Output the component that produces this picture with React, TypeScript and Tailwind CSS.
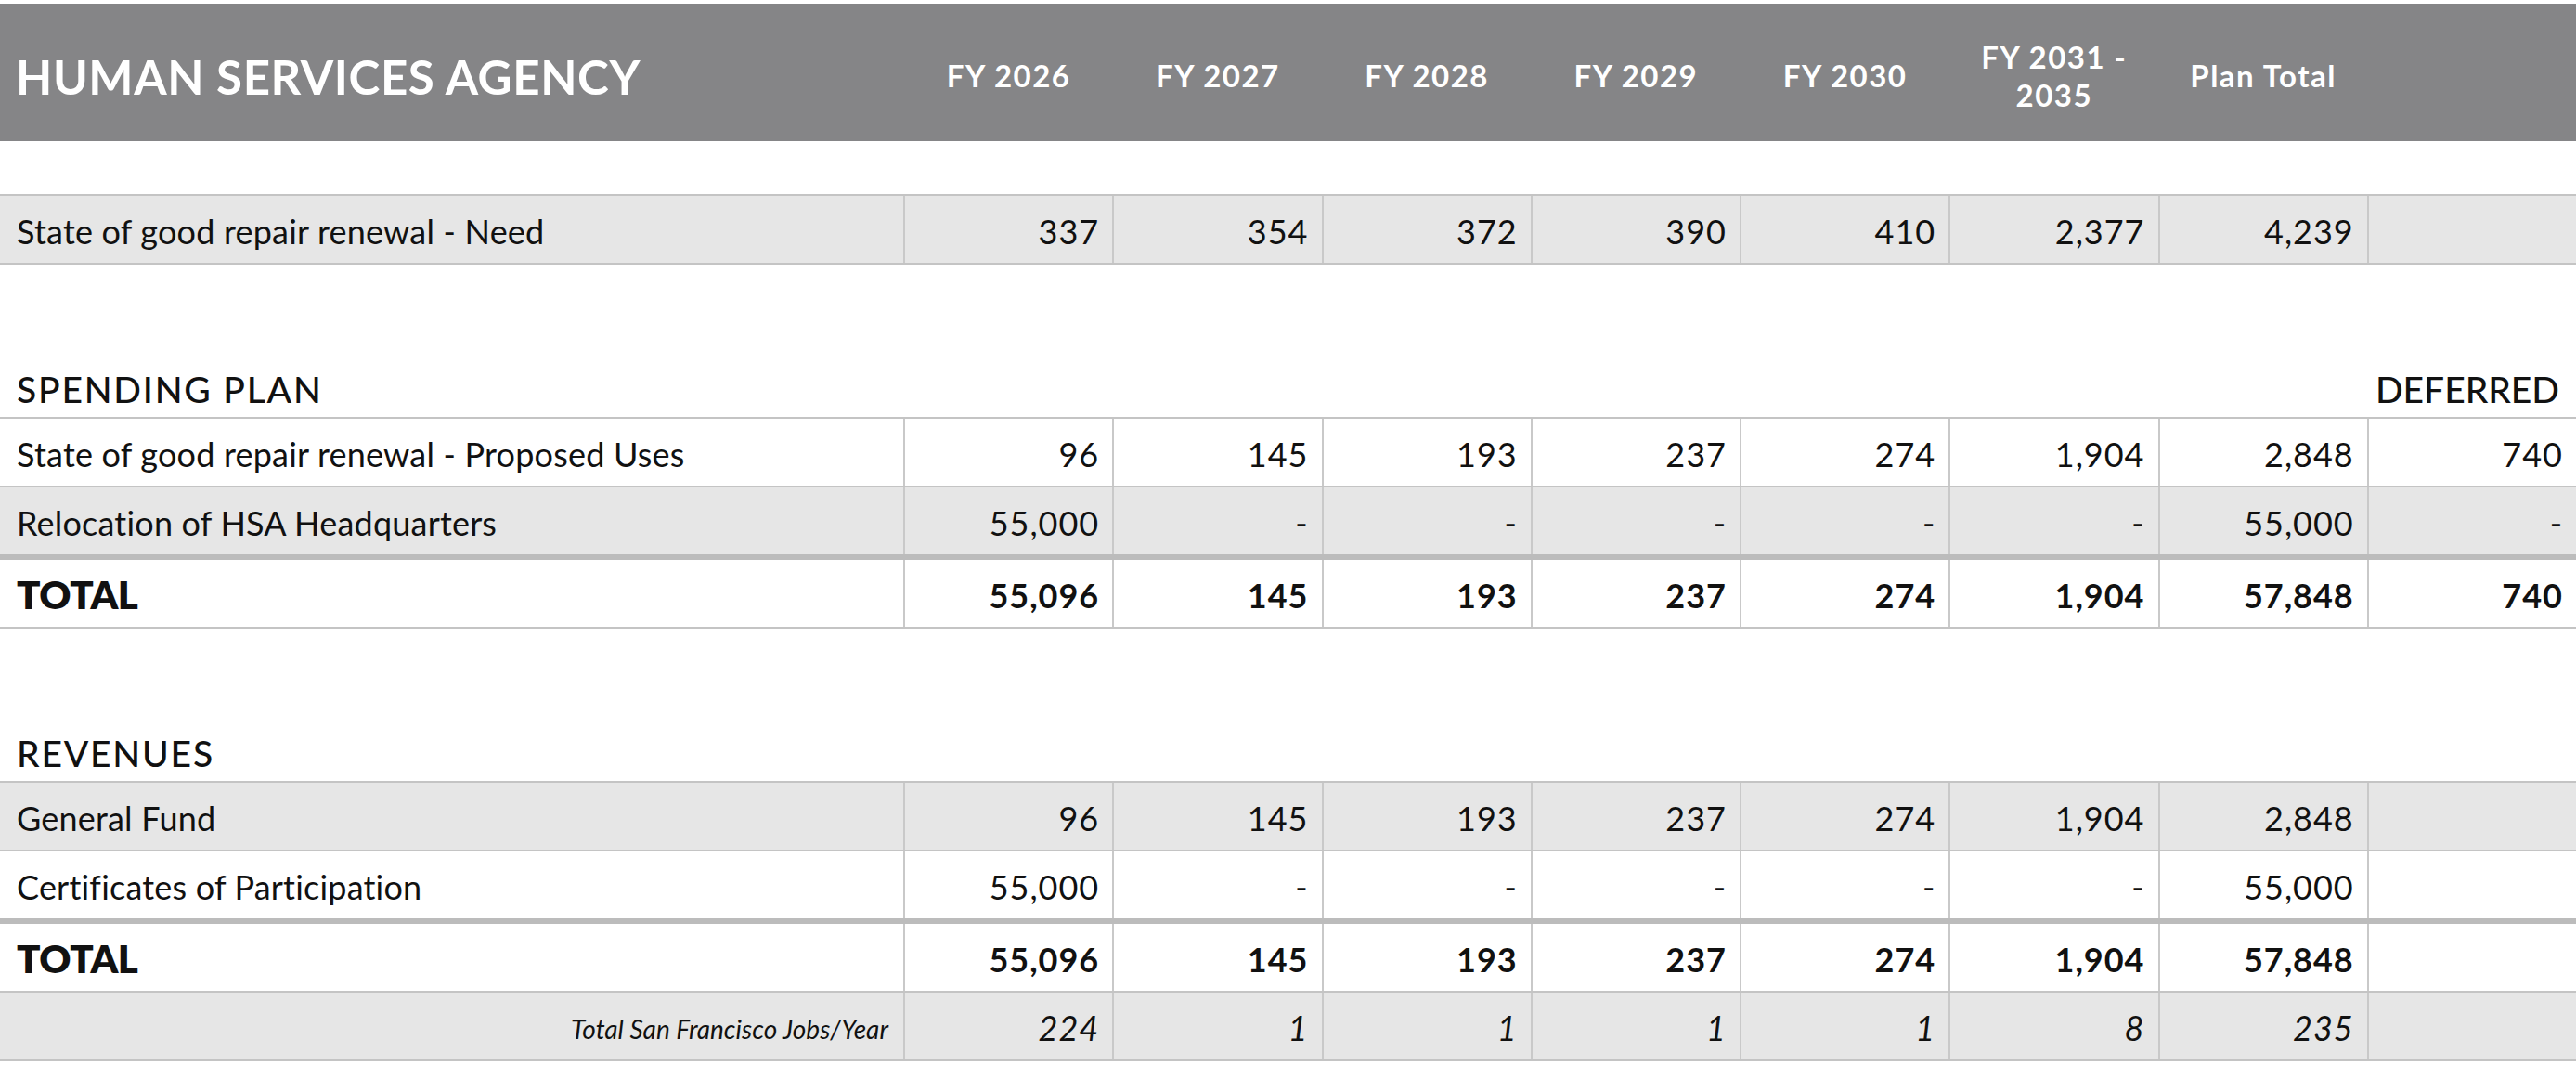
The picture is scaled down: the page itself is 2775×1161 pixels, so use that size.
const cols = ["FY 2026", "FY 2027", "FY 2028", "FY 2029", "FY 2030", "FY 2031 - 2035", "Plan Total", ""];

type Row = {
  label: string;
  values: string[];
  gray?: boolean;
  bold?: boolean;
  italic?: boolean;
};

const Cell = ({ value, bold, italic }: { value: string; bold?: boolean; italic?: boolean }) => (
  <div
    className={
      "flex-1 border-l-2 border-[#c9c9c9] flex items-center justify-end pr-[14px] pt-[3px] text-[36px] tracking-[1px] text-[#111] " +
      (bold ? "font-bold " : "") +
      (italic ? "italic" : "")
    }
  >
    {value}
  </div>
);

const DataRow = ({ row, thickTop }: { row: Row; thickTop?: boolean }) => (
  <div
    className={
      "flex " +
      (row.gray ? "bg-[#e6e6e6] " : "bg-white ") +
      (thickTop ? "h-[78px] border-t-[6px] border-[#bcbcbc]" : "h-[74px] border-t-2 border-[#c4c4c4]")
    }
  >
    {row.italic ? (
      <div className="w-[973px] shrink-0 flex items-center justify-end pr-[16px] pt-[6px] text-[28px] italic text-[#111]">
        {row.label}
      </div>
    ) : (
      <div
        className={
          "w-[973px] shrink-0 flex items-center pl-[18px] pt-[3px] text-[#111] " +
          (row.bold ? "text-[42px] font-extrabold tracking-[-0.5px]" : "text-[36px] tracking-[0.2px]")
        }
      >
        {row.label}
      </div>
    )}
    {row.values.map((v, i) => (
      <Cell key={i} value={v} bold={row.bold} italic={row.italic} />
    ))}
  </div>
);

const SectionLabel = ({ title, right }: { title: string; right?: string }) => (
  <div className="flex h-[164px] items-end pb-[1px] pl-[18px] pr-[18px] text-[39px] font-medium text-[#111]">
    <div className="flex-1 tracking-[1.8px]">{title}</div>
    {right && <div className="tracking-[0px]">{right}</div>}
  </div>
);

const spending: Row[] = [
  { label: "State of good repair renewal - Proposed Uses", values: ["96", "145", "193", "237", "274", "1,904", "2,848", "740"] },
  { label: "Relocation of HSA Headquarters", values: ["55,000", "-", "-", "-", "-", "-", "55,000", "-"], gray: true },
];

const revenues: Row[] = [
  { label: "General Fund", values: ["96", "145", "193", "237", "274", "1,904", "2,848", ""], gray: true },
  { label: "Certificates of Participation", values: ["55,000", "-", "-", "-", "-", "-", "55,000", ""] },
];

export default function App() {
  return (
    <div className="w-[2775px] h-[1161px] bg-white pt-[4px] font-['Lato','Liberation_Sans',sans-serif] overflow-hidden">
      {/* header */}
      <div className="flex h-[148px] bg-[#858587] text-white">
        <div className="w-[973px] shrink-0 flex items-center pl-[17px] pt-[10px] text-[51px] font-bold tracking-[0.6px]">
          HUMAN SERVICES AGENCY
        </div>
        {cols.map((c, i) => (
          <div
            key={i}
            className="flex-1 flex items-center justify-center text-center pt-[8px] text-[33px] font-bold tracking-[1.5px] leading-[1.25] px-6 ml-[2px]"
          >
            {c}
          </div>
        ))}
      </div>

      <div className="h-[57px]" />

      <div className="border-b-2 border-[#c4c4c4]">
        <DataRow
          row={{ label: "State of good repair renewal - Need", values: ["337", "354", "372", "390", "410", "2,377", "4,239", ""], gray: true }}
        />
      </div>

      <SectionLabel title="SPENDING PLAN" right="DEFERRED" />
      <div className="border-b-2 border-[#c4c4c4]">
        {spending.map((r, i) => (
          <DataRow key={i} row={r} />
        ))}
        <DataRow thickTop row={{ label: "TOTAL", values: ["55,096", "145", "193", "237", "274", "1,904", "57,848", "740"], bold: true }} />
      </div>

      <SectionLabel title="REVENUES" />
      <div className="border-b-2 border-[#c4c4c4]">
        {revenues.map((r, i) => (
          <DataRow key={i} row={r} />
        ))}
        <DataRow thickTop row={{ label: "TOTAL", values: ["55,096", "145", "193", "237", "274", "1,904", "57,848", ""], bold: true }} />
        <DataRow
          row={{ label: "Total San Francisco Jobs/Year", values: ["224", "1", "1", "1", "1", "8", "235", ""], gray: true, italic: true }}
        />
      </div>
    </div>
  );
}
